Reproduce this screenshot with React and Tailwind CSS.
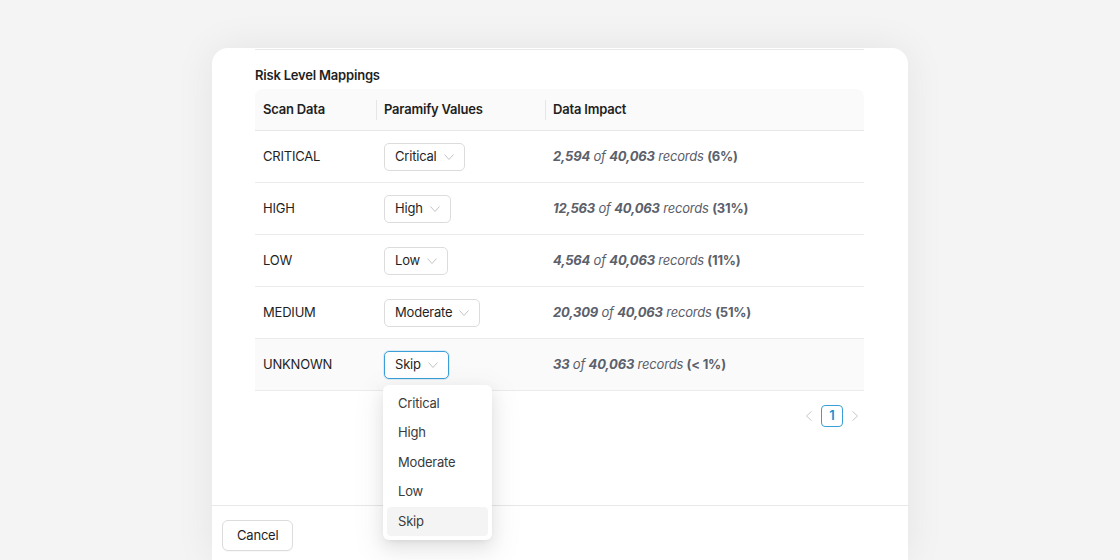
const rows = [
  { scan: "CRITICAL", value: "Critical", count: "2,594", pct: "(6%)" },
  { scan: "HIGH", value: "High", count: "12,563", pct: "(31%)" },
  { scan: "LOW", value: "Low", count: "4,564", pct: "(11%)" },
  { scan: "MEDIUM", value: "Moderate", count: "20,309", pct: "(51%)" },
  { scan: "UNKNOWN", value: "Skip", count: "33", pct: "(< 1%)", open: true },
];

const options = ["Critical", "High", "Moderate", "Low", "Skip"];

function Chevron({ className = "" }) {
  return (
    <svg viewBox="0 0 10 6" className={`w-[10px] h-[6px] ${className}`} fill="none">
      <polyline points="0.5,0.5 5,5.5 9.5,0.5" stroke="currentColor" strokeWidth="1" />
    </svg>
  );
}

function Select({ value, open }) {
  return (
    <div className="relative">
      <div
        className={`inline-flex items-center gap-[7px] h-[28px] pl-[10px] pr-[10px] rounded-[5px] bg-white border text-[13px] text-[#1f1f1f] ${
          open ? "border-[#3a9fd8] shadow-[0_0_0_1px_rgba(58,159,216,0.15)]" : "border-[#dcdcdc]"
        }`}
      >
        {value}
        <Chevron className="text-[#c4c4c4]" />
      </div>

      {open && (
        <div className="absolute left-[-1px] top-[34px] z-10 w-[109px] bg-white rounded-[6px] p-[4px] shadow-[0_6px_16px_rgba(0,0,0,0.08),0_3px_6px_-4px_rgba(0,0,0,0.12),0_9px_28px_8px_rgba(0,0,0,0.05)]">
          {options.map((o) => (
            <div
              key={o}
              className={`h-[29.5px] flex items-center px-[11px] rounded-[4px] text-[13px] text-[#3a3a3a] ${
                o === value ? "bg-[#f4f4f4]" : ""
              }`}
            >
              {o}
            </div>
          ))}
        </div>
      )}
    </div>
  );
}

function HeaderCell({ children, divider }) {
  return (
    <div className="flex items-center h-full">
      {divider && <div className="w-px h-[20px] bg-[#e6e6e6]" />}
      <div className={divider ? "pl-[7px]" : "pl-[8px]"}>{children}</div>
    </div>
  );
}

export default function App() {
  return (
    <div
      className="h-[560px] overflow-hidden bg-[#f4f4f4] pt-[48px]"
      style={{ fontFamily: "Inter, 'Noto Sans', sans-serif" }}
    >
      <div className="ml-[212px] w-[696px] bg-white rounded-t-[16px] shadow-[0_0_40px_rgba(0,0,0,0.07)] tracking-[-0.2px]">
        {/* Body */}
        <div className="h-[457px] px-[43px] pr-[44px] pt-[1px]">
          <div className="border-t border-[#e8e8e8]" />

          <h3 className="mt-[17px] text-[13px] font-semibold text-[#1f1f1f] leading-[16px]">
            Risk Level Mappings
          </h3>

          {/* Table */}
          <div className="mt-[6px] text-[13px] text-[#1f1f1f]">
            <div className="grid grid-cols-[121px_169px_1fr] h-[42px] bg-[#fafafa] rounded-t-[8px] border-b border-[#e6e6e6] font-semibold">
              <HeaderCell>Scan Data</HeaderCell>
              <HeaderCell divider>Paramify Values</HeaderCell>
              <HeaderCell divider>Data Impact</HeaderCell>
            </div>

            {rows.map((r) => (
              <div
                key={r.scan}
                className={`grid grid-cols-[121px_169px_1fr] h-[52px] items-center border-b border-[#ebebeb] ${
                  r.open ? "bg-[#fafafa]" : ""
                }`}
              >
                <div className="pl-[8px]">{r.scan}</div>
                <div className="pl-[8px]">
                  <Select value={r.value} open={r.open} />
                </div>
                <div className="pl-[8px] text-[#5b606b]">
                  <span className="italic font-bold">{r.count}</span>
                  <span className="italic"> of </span>
                  <span className="italic font-bold">40,063</span>
                  <span className="italic"> records </span>
                  <span className="font-bold">{r.pct}</span>
                </div>
              </div>
            ))}
          </div>

          {/* Pagination */}
          <div className="flex justify-end items-center gap-[6px] mt-[14px] pr-[6px]">
            <svg viewBox="0 0 6 10" className="w-[6px] h-[10px] text-[#c8c8c8]" fill="none">
              <polyline points="5.5,0.5 0.5,5 5.5,9.5" stroke="currentColor" strokeWidth="1" />
            </svg>
            <div className="w-[22px] h-[22px] mx-[3px] flex items-center justify-center rounded-[4px] border border-[#3a9fd8] text-[#1f8fce] text-[13px] font-semibold">
              1
            </div>
            <svg viewBox="0 0 6 10" className="w-[6px] h-[10px] text-[#c8c8c8]" fill="none">
              <polyline points="0.5,0.5 5.5,5 0.5,9.5" stroke="currentColor" strokeWidth="1" />
            </svg>
          </div>
        </div>

        {/* Footer */}
        <div className="border-t border-[#e8e8e8] pt-[14px] pl-[10px] h-[55px]">
          <button className="h-[31px] px-[14px] rounded-[6px] border border-[#dcdcdc] bg-white text-[13px] text-[#1f1f1f] shadow-[0_1px_1px_rgba(0,0,0,0.03)]">
            Cancel
          </button>
        </div>
      </div>
    </div>
  );
}
